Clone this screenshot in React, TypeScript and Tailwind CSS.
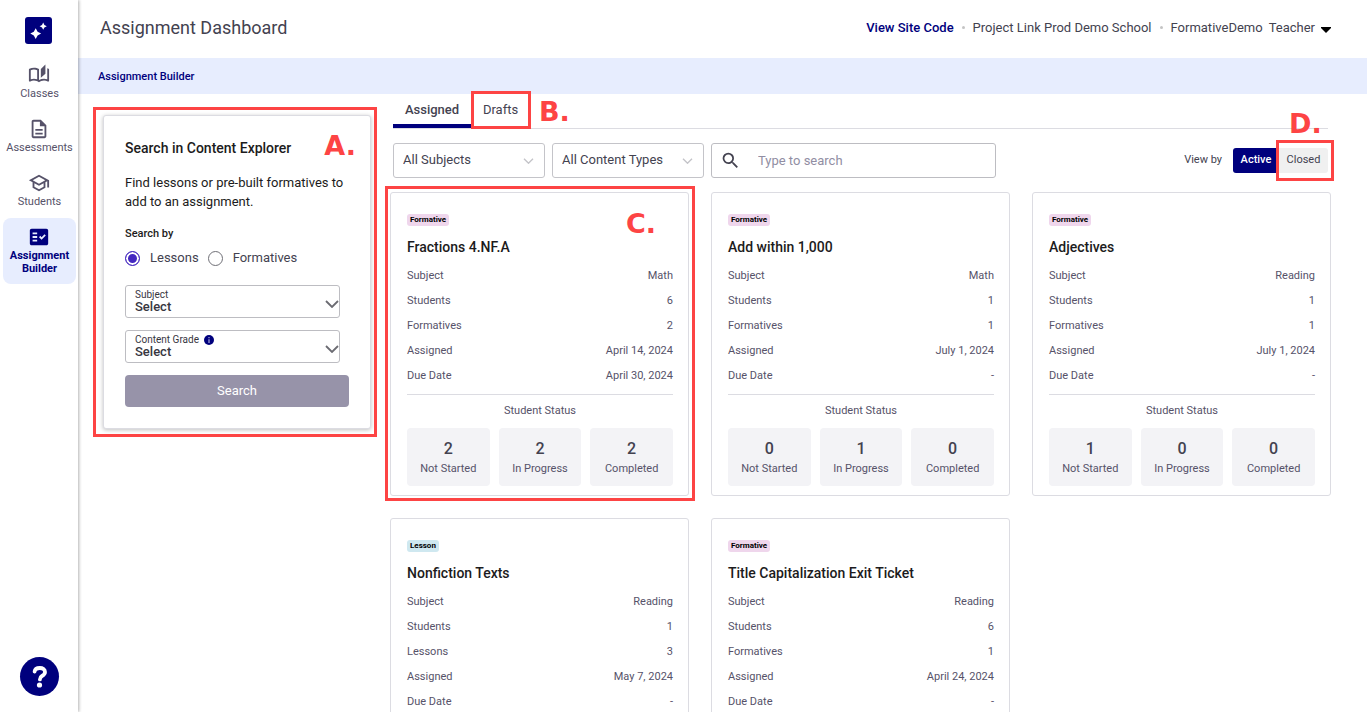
import { useState } from "react";
import type { ReactNode } from "react";
import {
  MdFactCheck,
  MdOutlineAutoStories,
  MdOutlineDescription,
  MdOutlineSchool,
  MdSearch,
} from "react-icons/md";

type Assignment = {
  type: "Formative" | "Lesson";
  title: string;
  subject: string;
  students: number;
  items: number;
  assigned: string;
  due: string;
  status: [number, number, number];
};

const assignments: Assignment[] = [
  { type: "Formative", title: "Fractions 4.NF.A", subject: "Math", students: 6, items: 2, assigned: "April 14, 2024", due: "April 30, 2024", status: [2, 2, 2] },
  { type: "Formative", title: "Add within 1,000", subject: "Math", students: 1, items: 1, assigned: "July 1, 2024", due: "-", status: [0, 1, 0] },
  { type: "Formative", title: "Adjectives", subject: "Reading", students: 1, items: 1, assigned: "July 1, 2024", due: "-", status: [1, 0, 0] },
  { type: "Lesson", title: "Nonfiction Texts", subject: "Reading", students: 1, items: 3, assigned: "May 7, 2024", due: "-", status: [1, 0, 0] },
  { type: "Formative", title: "Title Capitalization Exit Ticket", subject: "Reading", students: 6, items: 1, assigned: "April 24, 2024", due: "-", status: [6, 0, 0] },
];

const navItems = [
  { label: "Classes", Icon: MdOutlineAutoStories },
  { label: "Assessments", Icon: MdOutlineDescription },
  { label: "Students", Icon: MdOutlineSchool },
  { label: "Assignment Builder", Icon: MdFactCheck, active: true },
];

function Chevron({ className }: { className: string }) {
  return (
    <svg viewBox="0 0 14 8" fill="none" stroke="currentColor" strokeWidth="1.8" className={className} aria-hidden="true">
      <path d="M1 1l6 6 6-6" />
    </svg>
  );
}

function Callout({ box, letter, children }: { box: string; letter: string; children: string }) {
  return (
    <>
      <span className={`pointer-events-none absolute border-3 border-[#fd4444] ${box}`} />
      <span
        className={`pointer-events-none absolute font-['DejaVu_Sans',sans-serif] text-[27px] leading-7 font-bold text-[#fd4444] ${letter}`}
      >
        {children}
      </span>
    </>
  );
}

function Sidebar() {
  return (
    <aside className="sticky top-0 flex h-screen w-[78px] shrink-0 flex-col items-center bg-white pt-[17px] pb-4 shadow-[1px_0_3px_rgba(0,0,0,0.3)]">
      <a href="#home" aria-label="Home" className="mr-0.5 flex size-[27px] items-center justify-center rounded-[3px] bg-[#00007d] text-white">
        <svg viewBox="0 0 27 27" fill="currentColor" className="size-full" aria-hidden="true">
          <path d="M10.7 11.2l1.9 3.5 3.5 1.9-3.5 1.9-1.9 3.5-1.9-3.5-3.5-1.9 3.5-1.9z" />
          <path d="M18.2 5.6l1.2 2.4 2.4 1.2-2.4 1.2-1.2 2.4-1.2-2.4-2.4-1.2L17 8z" />
        </svg>
      </a>
      <nav className="mt-3 flex w-full flex-col pr-0.5 pl-[3px]">
        {navItems.map(({ label, Icon, active }) => (
          <a
            key={label}
            href={`#${label.toLowerCase().replace(" ", "-")}`}
            className={`flex flex-col items-center rounded-lg pt-2 text-center text-[11px] leading-[13px] ${
              active ? "bg-[#e7edfe] pb-[9px] font-bold text-[#00007d]" : "pb-[10px] text-[#565269]"
            }`}
          >
            <Icon className="mr-0.5 mb-px size-[22px]" />
            {label}
          </a>
        ))}
      </nav>
      <button type="button" aria-label="Help" className="mt-auto flex size-[39px] items-center justify-center rounded-full bg-[#00007d] text-white">
        <svg viewBox="0 0 39 39" fill="none" className="size-full" aria-hidden="true">
          <path d="M14.6 14.6c.3-2.2 2.3-3.6 5.2-3.6 3 0 5.2 1.5 5.2 4 0 2.2-1.4 3.1-3 4-1.5.9-2.1 1.5-2.1 3.4" stroke="currentColor" strokeWidth="3.8" strokeLinecap="round" />
          <circle cx="19.5" cy="28" r="2.6" fill="currentColor" />
        </svg>
      </button>
    </aside>
  );
}

function Header() {
  return (
    <header className="flex h-[58px] items-center justify-between bg-white pr-9 pb-[3px] pl-[22px] text-[#434250]">
      <h1 className="text-[18px] leading-6">Assignment Dashboard</h1>
      <div className="flex items-center text-[13px]">
        <a href="#site-code" className="font-medium text-[#00007d]">View Site Code</a>
        <span className="mx-2 size-[3px] rounded-full bg-[#c4c4c4]" />
        <span>Project Link Prod Demo School</span>
        <span className="mx-2 size-[3px] rounded-full bg-[#c4c4c4]" />
        <button type="button" className="flex items-center">
          <span className="mr-[6px]">FormativeDemo</span>
          <span>Teacher</span>
          <svg viewBox="0 0 10 6" className="mt-1 ml-[6px] h-[6px] w-[10px]" aria-hidden="true">
            <path d="M0 0h10v1L5 6 0 1z" fill="black" />
          </svg>
        </button>
      </div>
    </header>
  );
}

function FloatingSelect({ id, label, info }: { id: string; label: string; info?: boolean }) {
  return (
    <div className="relative mr-[9px] mb-3 h-[33px] text-[#37363f]">
      <label htmlFor={id} className="absolute top-1 left-[10px] flex items-center text-[10px] leading-3">
        {label}
        {info && (
          <svg viewBox="0 0 10 10" className="ml-[5px] size-[10px]" aria-hidden="true">
            <circle cx="5" cy="5" r="5" fill="#00007d" />
            <path d="M5 2v1.2M5 4.2V8" stroke="#a9a9dd" strokeWidth="1.2" />
          </svg>
        )}
      </label>
      <select id={id} className="h-full w-full appearance-none rounded-[3px] border border-[#bdbdc2] bg-transparent pt-[10px] pl-[9px] text-[13px] font-medium">
        <option>Select</option>
      </select>
      <Chevron className="pointer-events-none absolute top-[15px] right-px h-2 w-[14px] text-[#6b6b72]" />
    </div>
  );
}

function SearchPanel() {
  const [kind, setKind] = useState("Lessons");
  return (
    <section className="relative mt-[21px] w-[268px] shrink-0 rounded-[3px] border border-[#dcdce2] bg-white px-[21px] pt-[22px] pb-[21px] shadow-[0_1px_4px_rgba(0,0,0,0.25)]">
      <h2 className="text-[14px] leading-5 font-medium text-[#1c1b20]">Search in Content Explorer</h2>
      <p className="mt-[15px] text-[13px] leading-[19px] text-[#1c1b20]">Find lessons or pre-built formatives to add to an assignment.</p>
      <fieldset className="mt-[15px]">
        <legend className="text-[11px] leading-4 font-medium text-[#1c1b20]">Search by</legend>
        <div className="mt-[6px] flex h-5 items-center gap-[9px] text-[13px] text-[#434250]">
          {["Lessons", "Formatives"].map((k) => (
            <label key={k} className="flex items-center gap-[10px]">
              <input
                type="radio"
                name="kind"
                checked={kind === k}
                onChange={() => setKind(k)}
                className="size-[15px] appearance-none rounded-full border border-[#6f6f76] checked:border-[#4529c0] checked:bg-[#4529c0] checked:shadow-[inset_0_0_0_2px_white]"
              />
              {k}
            </label>
          ))}
        </div>
      </fieldset>
      <div className="mt-[17px]">
        <FloatingSelect id="subject" label="Subject" />
        <FloatingSelect id="grade" label="Content Grade" info />
      </div>
      <button type="button" className="h-8 w-full rounded-[4px] bg-[#9793a9] text-[13px] text-white">
        Search
      </button>
      <Callout box="-top-[9px] -right-[7px] -bottom-[9px] -left-[11px]" letter="top-4 right-[14px]">A.</Callout>
    </section>
  );
}

function FilterSelect({ label }: { label: string }) {
  return (
    <div className="relative w-[152px]">
      <select aria-label={label} className="h-[35px] w-full appearance-none rounded-[3px] border border-[#c4c4c9] bg-white pr-6 pb-0.5 pl-[9px] text-[13px] text-[#434250]">
        <option>{label}</option>
      </select>
      <Chevron className="pointer-events-none absolute top-[15px] right-[11px] h-[6px] w-[11px] text-[#c4c4c9]" />
    </div>
  );
}

function AssignmentCard({ item, children }: { item: Assignment; children?: ReactNode }) {
  const rows = [
    ["Subject", item.subject],
    ["Students", item.students],
    [`${item.type}s`, item.items],
    ["Assigned", item.assigned],
    ["Due Date", item.due],
  ];
  return (
    <article className="relative rounded-[3px] border border-[#dcdce2] bg-white pt-[21px] pr-[15px] pb-[9px] pl-4 text-[11px] text-[#565269]">
      <div className="flex">
        <span
          className={`rounded-[3px] px-[3px] text-[8px] leading-3 font-bold text-black ${
            item.type === "Lesson" ? "bg-[#cfe8f0]" : "bg-[#efd6ec]"
          }`}
        >
          {item.type}
        </span>
      </div>
      <h3 className="mt-[11px] text-[14px] leading-5 font-medium text-[#1c1b20]">{item.title}</h3>
      <dl className="mt-[6px] border-b border-[#dcdce2] pb-[6px]">
        {rows.map(([name, value]) => (
          <div key={name} className="flex justify-between leading-[25px]">
            <dt>{name}</dt>
            <dd>{value}</dd>
          </div>
        ))}
      </dl>
      <p className="mt-[6px] text-center leading-5">Student Status</p>
      <div className="mt-[7px] grid grid-cols-3 gap-[9px]">
        {["Not Started", "In Progress", "Completed"].map((name, i) => (
          <div key={name} className="h-[58px] rounded-[4px] bg-[#f3f3f6] pt-[11px] text-center">
            <div className="text-base leading-5 font-medium text-[#434250]">{item.status[i]}</div>
            <div className="leading-5">{name}</div>
          </div>
        ))}
      </div>
      {children}
    </article>
  );
}

export default function App() {
  return (
    <div className="flex min-h-screen bg-white font-[Roboto,'Liberation_Sans',sans-serif]">
      <Sidebar />
      <div className="min-w-0 flex-1">
        <Header />
        <div className="flex h-9 items-center bg-[#e7edfe] pt-0.5 pl-5">
          <a href="#assignment-builder" className="text-[11px] leading-4 font-medium text-[#00007d]">Assignment Builder</a>
        </div>
        <main className="flex items-start gap-[19px] pr-9 pb-6 pl-[25px]">
          <SearchPanel />
          <div className="min-w-0 flex-1">
            <div className="mx-[3px] flex h-[35px] border-b border-[#dcdce2] text-[13px] text-[#434250]" role="tablist">
              <button type="button" role="tab" aria-selected="true" className="h-[34px] w-[78px] border-b-4 border-[#00007d] pt-0.5 font-medium">
                Assigned
              </button>
              <div className="relative">
                <button type="button" role="tab" aria-selected="false" className="h-[34px] w-[59px] pb-0.5">
                  Drafts
                </button>
                <Callout box="-top-[3px] left-0 h-[38px] w-[60px]" letter="top-1 left-[68px]">B.</Callout>
              </div>
            </div>
            <div className="mx-[3px] mt-[14px] flex items-center gap-[7px]">
              <FilterSelect label="All Subjects" />
              <FilterSelect label="All Content Types" />
              <label className="flex h-[35px] w-[285px] items-center rounded-[3px] border border-[#bdbdc2] pl-2">
                <MdSearch className="size-[21px] text-[#434250]" />
                <input type="search" aria-label="Search assignments" placeholder="Type to search" className="ml-[17px] min-w-0 flex-1 text-[13px] outline-none placeholder:text-[#918ea3]" />
              </label>
              <div className="ml-auto flex items-center text-[11px] text-[#434250]">
                <span className="mr-[11px]">View by</span>
                <button type="button" className="h-[25px] w-[44px] rounded-l-[3px] bg-[#00007d] pl-0.5 font-medium text-white">Active</button>
                <div className="relative">
                  <button type="button" className="h-[25px] w-[51px] rounded-r-[3px] bg-[#f0f0f0] pl-0.5">Closed</button>
                  <Callout box="-top-2 -left-px h-[41px] w-[58px]" letter="-top-[38px] left-3">D.</Callout>
                </div>
              </div>
            </div>
            <div className="mt-[14px] grid grid-cols-3 gap-[22px]">
              {assignments.map((item, i) => (
                <AssignmentCard key={item.title} item={item}>
                  {i === 0 && <Callout box="-top-[7px] -right-[7px] -bottom-[6px] -left-[6px]" letter="top-[17px] right-8">C.</Callout>}
                </AssignmentCard>
              ))}
            </div>
          </div>
        </main>
      </div>
    </div>
  );
}
